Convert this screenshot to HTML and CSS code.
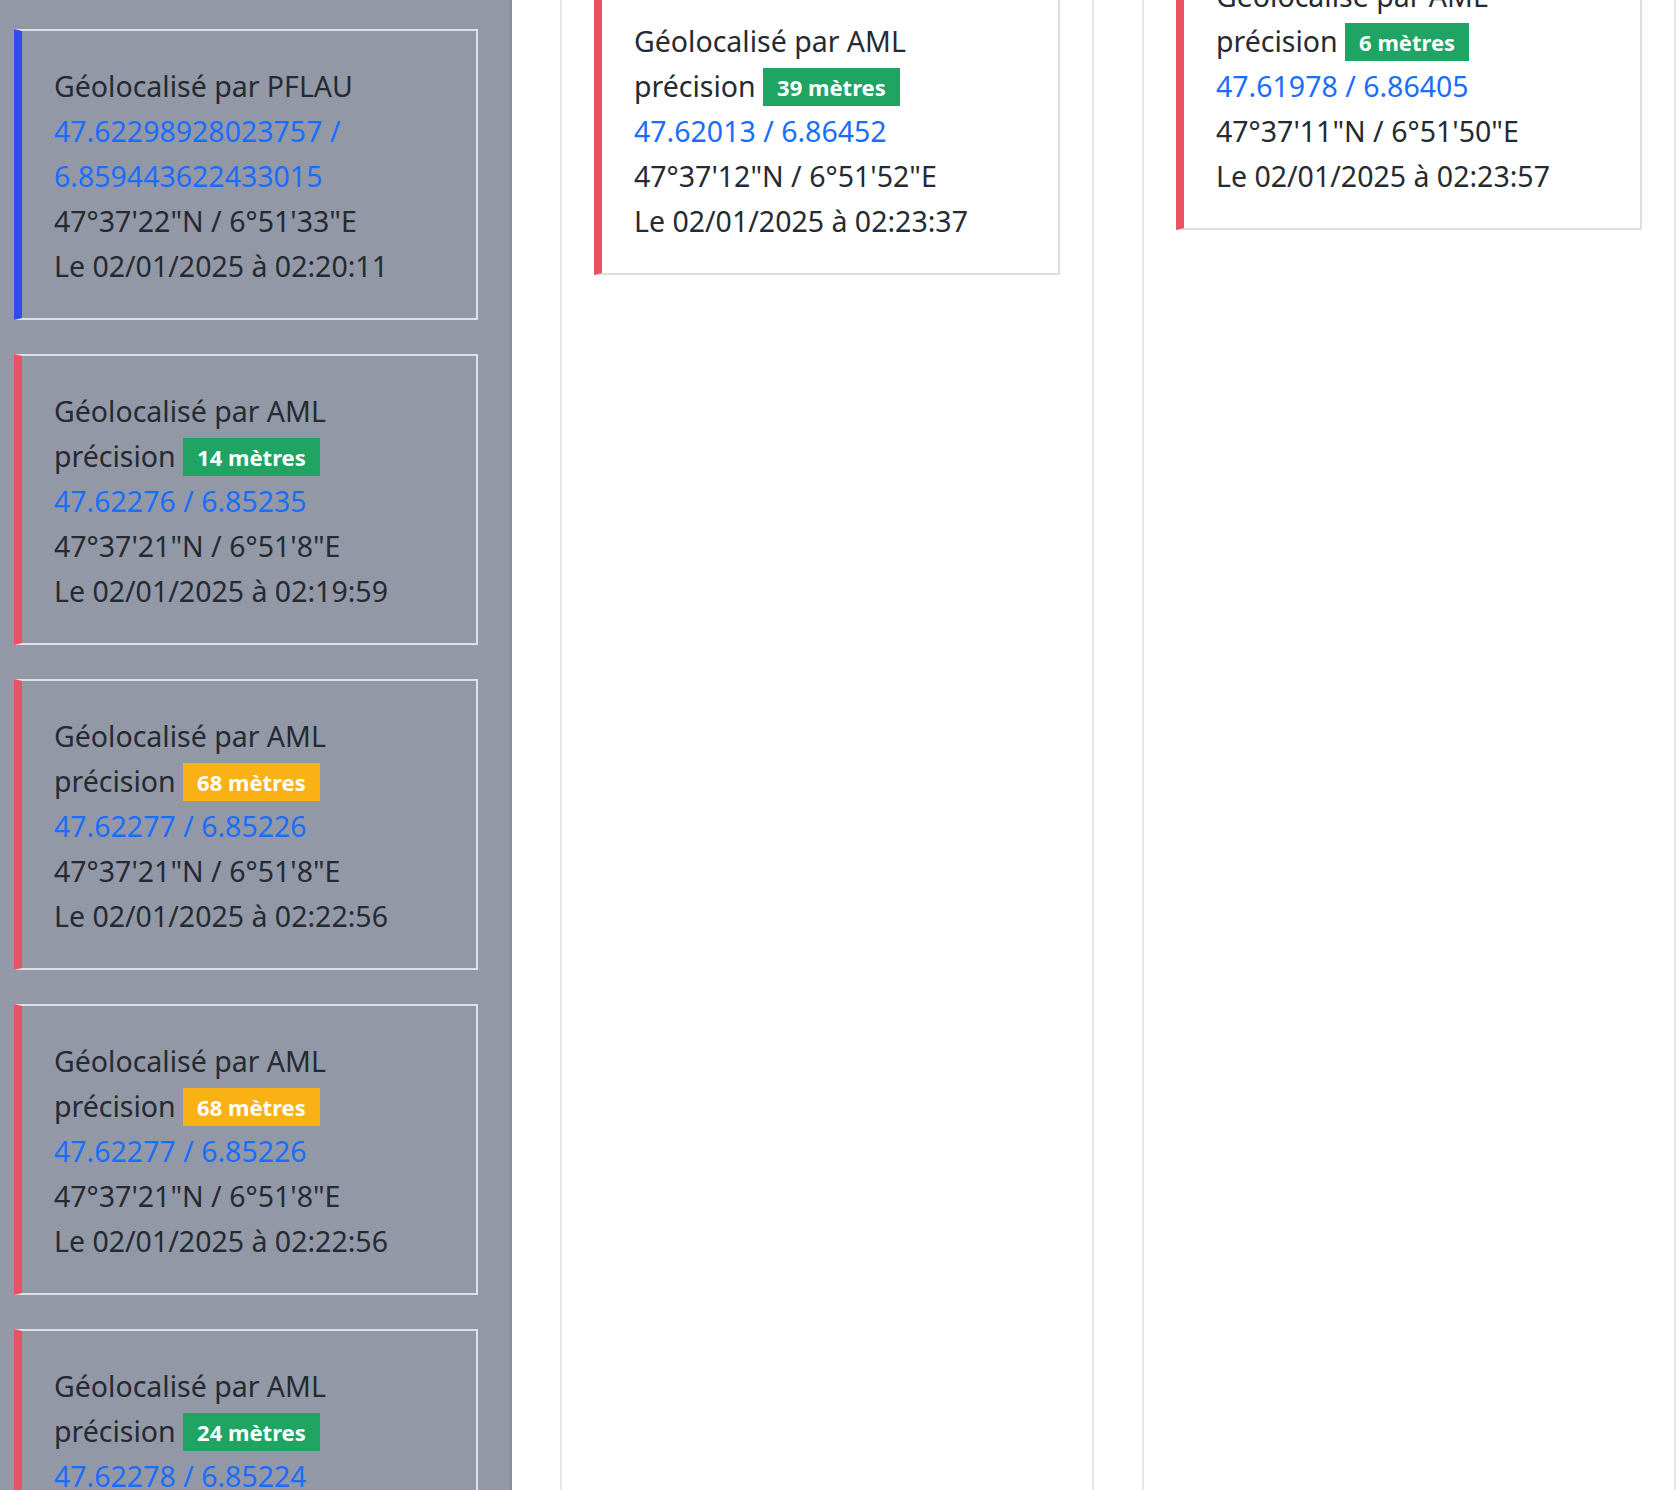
FILE: index.html
```html
<!DOCTYPE html>
<html lang="fr">
<head>
<meta charset="utf-8">
<title>Géolocalisations</title>
<link rel="stylesheet" href="styles.css">
</head>
<body>
<div class="board">
  <section class="column column-muted">
    <div class="list">
      <article class="geo-card geo-card-pflau">
        <div class="line">Géolocalisé par PFLAU</div>
        <div class="line"><a class="coords" href="#">47.62298928023757 / 6.859443622433015</a></div>
        <div class="line">47°37'22"N / 6°51'33"E</div>
        <div class="line">Le 02/01/2025 à 02:20:11</div>
      </article>
      <article class="geo-card geo-card-aml">
        <div class="line">Géolocalisé par AML</div>
        <div class="line">précision <span class="badge badge-success">14 mètres</span></div>
        <div class="line"><a class="coords" href="#">47.62276 / 6.85235</a></div>
        <div class="line">47°37'21"N / 6°51'8"E</div>
        <div class="line">Le 02/01/2025 à 02:19:59</div>
      </article>
      <article class="geo-card geo-card-aml">
        <div class="line">Géolocalisé par AML</div>
        <div class="line">précision <span class="badge badge-warning">68 mètres</span></div>
        <div class="line"><a class="coords" href="#">47.62277 / 6.85226</a></div>
        <div class="line">47°37'21"N / 6°51'8"E</div>
        <div class="line">Le 02/01/2025 à 02:22:56</div>
      </article>
      <article class="geo-card geo-card-aml">
        <div class="line">Géolocalisé par AML</div>
        <div class="line">précision <span class="badge badge-warning">68 mètres</span></div>
        <div class="line"><a class="coords" href="#">47.62277 / 6.85226</a></div>
        <div class="line">47°37'21"N / 6°51'8"E</div>
        <div class="line">Le 02/01/2025 à 02:22:56</div>
      </article>
      <article class="geo-card geo-card-aml">
        <div class="line">Géolocalisé par AML</div>
        <div class="line">précision <span class="badge badge-success">24 mètres</span></div>
        <div class="line"><a class="coords" href="#">47.62278 / 6.85224</a></div>
        <div class="line">47°37'21"N / 6°51'8"E</div>
        <div class="line">Le 02/01/2025 à 02:22:56</div>
      </article>
    </div>
  </section>

  <section class="column">
    <div class="list list-shift-1">
      <article class="geo-card geo-card-aml">
        <div class="line">Géolocalisé par AML</div>
        <div class="line">précision <span class="badge badge-success">39 mètres</span></div>
        <div class="line"><a class="coords" href="#">47.62013 / 6.86452</a></div>
        <div class="line">47°37'12"N / 6°51'52"E</div>
        <div class="line">Le 02/01/2025 à 02:23:37</div>
      </article>
    </div>
  </section>

  <section class="column">
    <div class="list list-shift-2">
      <article class="geo-card geo-card-aml">
        <div class="line">Géolocalisé par AML</div>
        <div class="line">précision <span class="badge badge-success">6 mètres</span></div>
        <div class="line"><a class="coords" href="#">47.61978 / 6.86405</a></div>
        <div class="line">47°37'11"N / 6°51'50"E</div>
        <div class="line">Le 02/01/2025 à 02:23:57</div>
      </article>
    </div>
  </section>
</div>
</body>
</html>
```

FILE: styles.css
```css
html, body {
  margin: 0;
  padding: 0;
  background: #ffffff;
  overflow: hidden;
}

body {
  font-family: "Noto Sans", "Open Sans", sans-serif;
  font-size: 28.5px;
  line-height: 45px;
  color: #262a31;
  height: 1490px;
}

.board {
  display: flex;
  gap: 48px;
  margin-left: -20px;
  height: 1490px;
}

.column {
  flex: 0 0 534px;
  box-sizing: border-box;
  height: 1490px;
  border-left: 2px solid #e7e7e8;
  border-right: 2px solid #e7e7e8;
  padding: 29px 32px 0 32px;
  overflow: hidden;
  background: #ffffff;
}

.column-muted {
  flex-basis: 532px;
  background: #9398a7;
  border-color: #878d9b;
}

.list {
  display: flex;
  flex-direction: column;
  gap: 34px;
}

.list-shift-1 {
  margin-top: -45px;
}

.list-shift-2 {
  margin-top: -90px;
}

.geo-card {
  border: 2px solid #dadde2;
  border-left: 8px solid #e85263;
  padding: 33px 18px 29px 32px;
}

.column-muted .geo-card {
  border-color: #dfe1e6;
  border-left-color: #e85263;
}

.column-muted .geo-card-pflau {
  border-left-color: #2f4bf1;
}

.coords {
  color: #1a6efc;
  text-decoration: none;
}

.badge {
  display: inline-block;
  padding: 8px 14px;
  font-size: 22px;
  line-height: 22px;
  font-weight: 700;
  color: #ffffff;
  vertical-align: 1px;
}

.badge-success {
  background: #20a464;
}

.badge-warning {
  background: #f9b115;
}
```
